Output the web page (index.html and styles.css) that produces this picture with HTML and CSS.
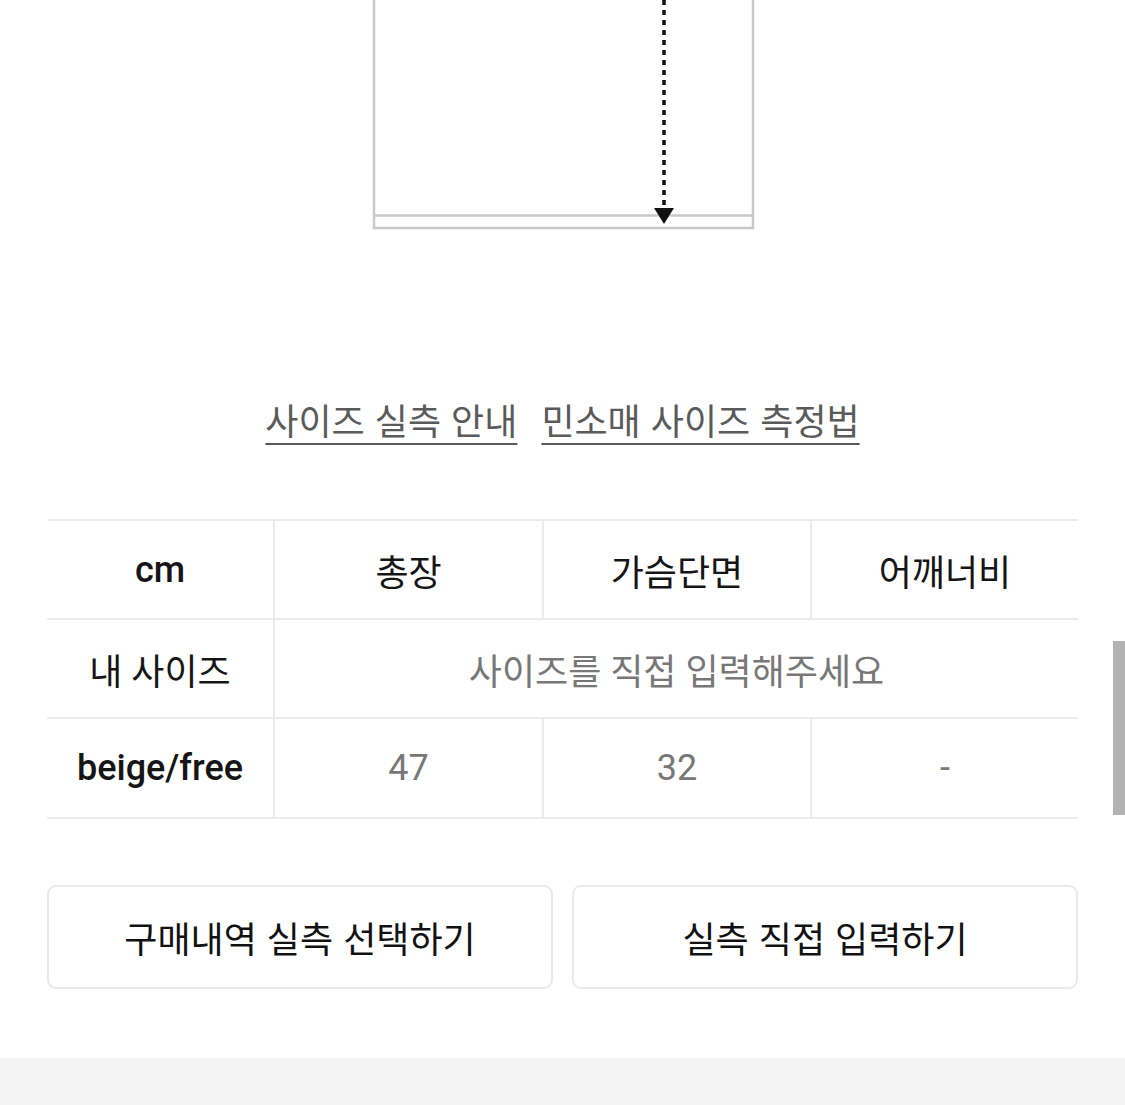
FILE: index.html
```html
<!DOCTYPE html>
<html lang="ko">
<head>
<meta charset="utf-8">
<link rel="stylesheet" href="styles.css">
</head>
<body>
<div class="page">
  <div class="diagram">
    <svg width="1125" height="240" viewBox="0 0 1125 240">
      <path d="M374 0 V228 H753 V0" fill="none" stroke="#c9c9c9" stroke-width="2.5"/>
      <path d="M375 215.5 H753" fill="none" stroke="#c9c9c9" stroke-width="2.5"/>
      <path d="M664 0 V206" fill="none" stroke="#111" stroke-width="3.5" stroke-dasharray="5 5"/>
      <polygon points="654,208 674,208 664,224" fill="#111"/>
    </svg>
  </div>

  <div class="links">
    <a class="link">사이즈 실측 안내</a>
    <a class="link">민소매 사이즈 측정법</a>
  </div>

  <div class="content">
    <table class="size-table">
      <colgroup>
        <col class="c1"><col class="c2"><col class="c3"><col class="c4">
      </colgroup>
      <tr>
        <td class="label latin">cm</td>
        <td class="head">총장</td>
        <td class="head">가슴단면</td>
        <td class="head">어깨너비</td>
      </tr>
      <tr>
        <td class="label">내 사이즈</td>
        <td class="muted" colspan="3">사이즈를 직접 입력해주세요</td>
      </tr>
      <tr>
        <td class="label latin">beige/free</td>
        <td class="muted num">47</td>
        <td class="muted num">32</td>
        <td class="muted num">-</td>
      </tr>
    </table>

    <div class="buttons">
      <button class="btn">구매내역 실측 선택하기</button>
      <button class="btn">실측 직접 입력하기</button>
    </div>
  </div>

  <div class="footer-band"></div>
  <div class="scrollbar"></div>
</div>
</body>
</html>
```

FILE: styles.css
```css
html, body {
  margin: 0;
  padding: 0;
  background: #fff;
}
body {
  font-family: Roboto, "Noto Sans CJK KR", sans-serif;
  color: #111;
}
.page {
  position: relative;
  width: 1125px;
  height: 1105px;
  overflow: hidden;
}
.diagram {
  height: 240px;
}
.diagram svg {
  display: block;
}
.links {
  display: flex;
  justify-content: center;
  gap: 24px;
  margin-top: 155px;
  height: 60px;
}
.link {
  font-family: "Noto Sans CJK KR", sans-serif;
  font-size: 36px;
  line-height: 48px;
  color: #5a5a5a;
  text-decoration: underline;
  text-decoration-thickness: 2px;
  text-underline-offset: 8px;
}
.content {
  padding: 0 47px;
  margin-top: 64px;
}
.size-table {
  width: 100%;
  border-collapse: collapse;
  table-layout: fixed;
}
.c1 { width: 227px; }
.c2 { width: 269px; }
.c3 { width: 268px; }
.c4 { width: 267px; }
.size-table td {
  height: 97px;
  padding: 0;
  text-align: center;
  vertical-align: middle;
  border: 2px solid #ebebeb;
  font-size: 36px;
  font-family: Roboto, "Noto Sans CJK KR", sans-serif;
}
.size-table tr:last-child td { height: 98px; }
.size-table tr td:first-child { border-left: none; }
.size-table tr td:last-child { border-right: none; }
.label, .head {
  color: #151515;
}
.latin {
  font-weight: 500;
  font-size: 38px;
}
.muted {
  color: #777;
}
.num {
  font-size: 37px;
}
.buttons {
  display: flex;
  gap: 19px;
  margin-top: 66px;
}
.btn {
  flex: 1;
  height: 104px;
  background: #fff;
  border: 2px solid #e9e9e9;
  border-radius: 9px;
  font-family: "Noto Sans CJK KR", sans-serif;
  font-size: 36px;
  color: #111;
  padding: 0;
}
.footer-band {
  position: absolute;
  left: 0;
  right: 0;
  top: 1058px;
  bottom: 0;
  background: #f4f4f4;
}
.scrollbar {
  position: absolute;
  right: 0;
  top: 641px;
  width: 12px;
  height: 174px;
  background: #b3b3b3;
}
```
